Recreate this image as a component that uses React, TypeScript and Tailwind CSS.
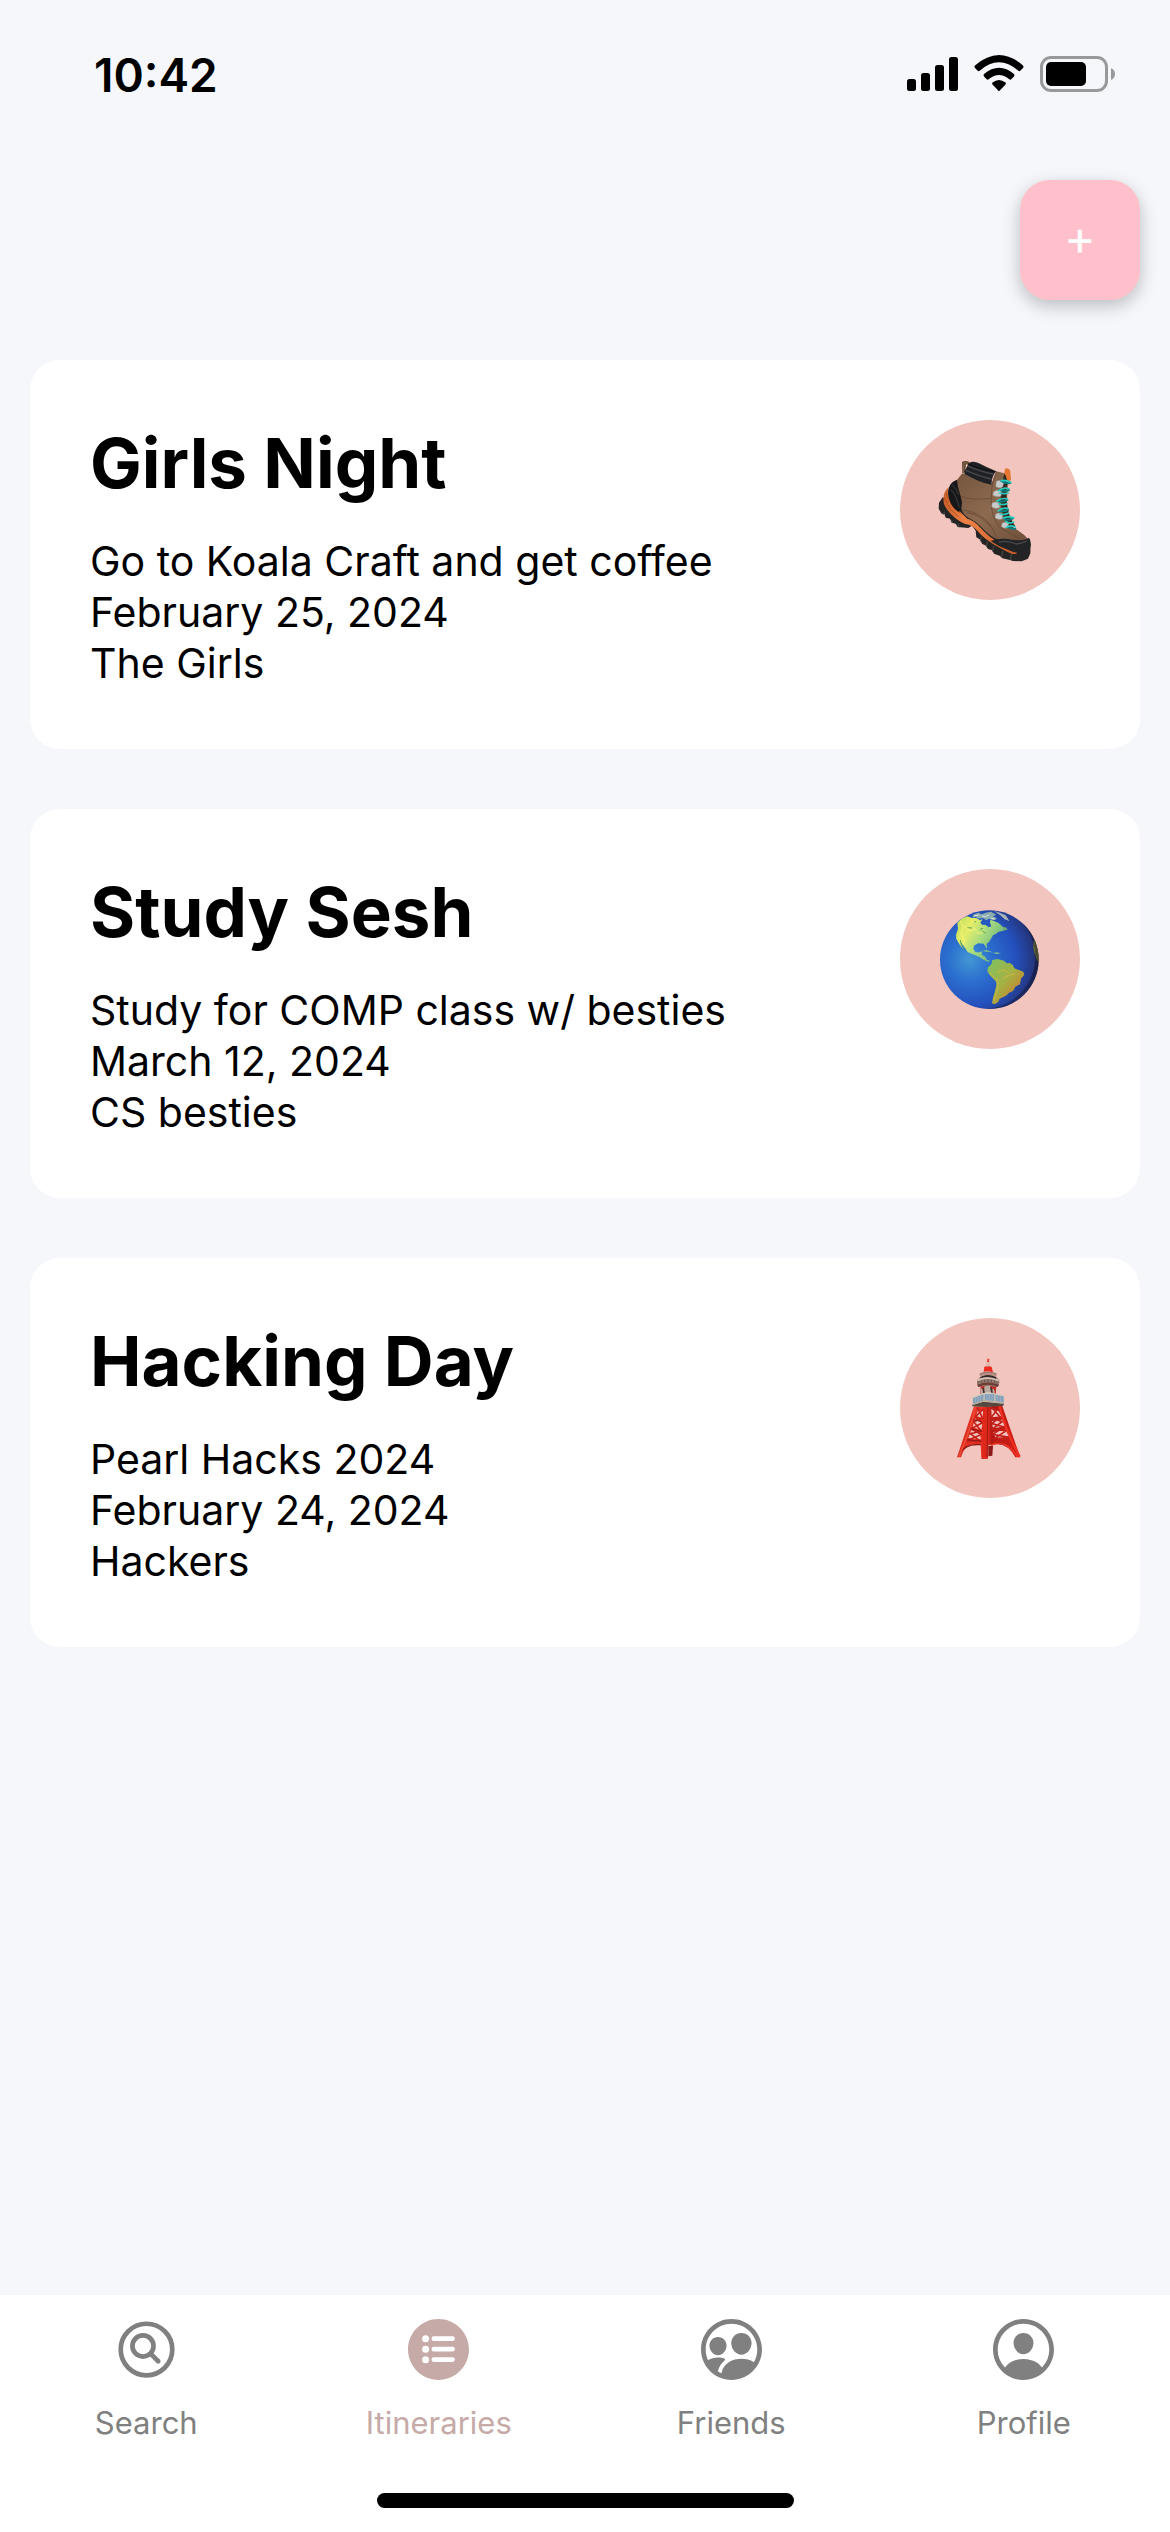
import type { ReactNode } from 'react';
import { IoListCircle, IoPeopleCircleOutline, IoPersonCircleOutline, IoSearchCircleOutline } from 'react-icons/io5';

function BootIcon() {
  return (
    <svg viewBox="135 135 330 330" className="w-[110px] h-[110px]" aria-hidden="true">
      <defs>
        <linearGradient id="leather" x1="0" y1="0" x2="1" y2="1">
          <stop offset="0" stopColor="#76553f" />
          <stop offset="0.5" stopColor="#8c6a4f" />
          <stop offset="1" stopColor="#6d4d38" />
        </linearGradient>
        <linearGradient id="trim" x1="0" y1="0" x2="1" y2="0">
          <stop offset="0" stopColor="#c9602a" />
          <stop offset="0.3" stopColor="#ee8246" />
          <stop offset="1" stopColor="#c65a24" />
        </linearGradient>
      </defs>
      <path d="M158 262L147 278L146 296L155 311L163 312L167 323L180 326L185 338L197 341L203 351L235 354L246 347L257 362L259 382L271 389L276 401L288 407L294 417L307 421L312 431L329 437L337 445L360 450L368 453L395 454L414 446L421 430L422 401L390 392Z" fill="#242425" />
      <path d="M184 330L188 339M204 340L208 352M274 380L271 394M292 394L289 410M311 408L308 425M338 423L335 440M364 432L362 450M164 305L160 314" stroke="#4b4b4c" strokeWidth="3" />
      <path d="M175 232C162 244 157 263 162 283C174 309 200 331 226 342C245 344 256 355 268 369C290 393 330 416 367 432L379 432L380 426C340 408 304 387 280 362C264 344 252 332 232 326L205 300L185 285L174 254Z" fill="url(#trim)" />
      <path d="M163 262L183 300L207 320M167 250L189 291L214 312" stroke="#a94717" strokeWidth="2" fill="none" />
      <path d="M217 190L216 156Q226 150 238 156L236 166L228 162L225 187Z" fill="#604733" />
      <path d="M221 187L221 160Q227 157 233 160" fill="none" stroke="#9b7658" strokeWidth="2" />
      <path d="M343 188L345 176Q352 172 360 180L363 207L354 225L345 211Z" fill="#e57631" />
      <path d="M217 190L199 212Q189 241 214 295Q218 314 237 325C257 334 269 345 283 361C306 384 337 400 371 402L419 396C410 375 386 364 367 350L353 330L350 286L354 222L343 190L319 184L305 220Q262 217 222 191Z" fill="url(#leather)" />
      <path d="M201 209C183 215 174 230 174 250C176 275 190 298 207 306Q215 300 216 278C213 253 203 239 201 209Z" fill="#171719" />
      <path d="M182 239Q198 251 208 292M187 224Q200 238 206 255" fill="none" stroke="#343436" strokeWidth="4" />
      <path d="M238 158Q251 151 267 160Q291 173 319 184Q306 196 304 224Q264 217 223 192Q223 180 229 173Z" fill="#202124" />
      <path d="M236 169Q262 182 309 192M229 182Q262 197 303 207" fill="none" stroke="#48494c" strokeWidth="4" strokeLinecap="round" />
      <path d="M235 162Q261 174 311 185" fill="none" stroke="#0d0e10" strokeWidth="3" />
      <path d="M319 186Q303 219 304 265C302 302 312 337 335 357Q365 371 390 387M213 259Q242 272 303 265M219 300Q270 305 301 345L322 386M231 307Q272 315 302 350" fill="none" stroke="#60442f" strokeWidth="2" />
      <path d="M302 393Q332 382 366 389Q404 394 417 383Q424 392 422 408L410 425Q379 434 350 418Q322 408 302 393Z" fill="#222324" />
      <path d="M326 397Q350 389 379 402Q398 400 411 393" fill="none" stroke="#48494a" strokeWidth="4" />
      <path d="M343 191Q350 197 352 220Q345 262 354 298Q359 326 376 348L364 355Q346 340 339 315Q330 280 333 249Q335 218 343 191Z" fill="#332820" />
      <g fill="#c8c9ca" stroke="#8e8b86" strokeWidth="1">
        <path d="M319 214Q328 208 342 216L338 231Q325 237 317 229Z" />
        <path d="M311 245Q319 237 335 243L333 258Q319 264 308 255Z" />
        <path d="M306 280Q315 273 328 279L329 293Q315 299 305 290Z" />
        <path d="M317 313Q325 306 338 312L337 327Q325 331 315 323Z" />
        <path d="M336 340Q344 333 356 340L354 353Q344 357 334 350Z" />
      </g>
      <g stroke="#087e7e" strokeWidth="6" strokeLinecap="round" fill="none">
        <path d="M334 213Q349 221 361 219M330 240Q343 245 357 240M327 273Q341 277 352 270M329 302Q343 307 354 299M344 327Q355 333 369 325M354 350Q365 358 376 356" />
      </g>
      <g stroke="#26cfc2" strokeWidth="5" strokeLinecap="round" fill="none">
        <path d="M334 212Q346 209 362 217M326 242Q341 231 356 236M329 249Q342 253 355 249M321 273Q334 262 352 267M326 281Q337 286 351 281M324 303Q336 292 352 295M330 312Q342 316 356 309M340 324Q353 318 371 323M347 334Q358 343 371 336M349 352Q361 344 375 350" />
      </g>
    </svg>
  );
}

function GlobeIcon() {
  return (
    <svg viewBox="135 132 330 330" className="w-[110px] h-[110px]" aria-hidden="true">
      <defs>
        <radialGradient id="ocean" cx="0.3" cy="0.5" r="0.72">
          <stop offset="0" stopColor="#4297d4" />
          <stop offset="0.3" stopColor="#2c70cf" />
          <stop offset="0.65" stopColor="#2450bd" />
          <stop offset="0.9" stopColor="#24367f" />
          <stop offset="1" stopColor="#151b3b" />
        </radialGradient>
        <linearGradient id="north" x1="0" y1="0" x2="1" y2="0.5">
          <stop offset="0" stopColor="#b5d85c" />
          <stop offset="0.3" stopColor="#e6ee68" />
          <stop offset="0.6" stopColor="#a7db80" />
          <stop offset="1" stopColor="#66b078" />
        </linearGradient>
        <linearGradient id="south" x1="0" y1="0" x2="1" y2="1">
          <stop offset="0" stopColor="#7dc263" />
          <stop offset="0.48" stopColor="#a3b244" />
          <stop offset="0.7" stopColor="#bd9236" />
          <stop offset="1" stopColor="#948b37" />
        </linearGradient>
        <clipPath id="planet"><circle cx="298" cy="299" r="148" /></clipPath>
      </defs>
      <circle cx="298" cy="299" r="148" fill="url(#ocean)" />
      <g clipPath="url(#planet)">
        <path d="M202 188L216 174L232 169L246 174L259 174L270 181L278 177L271 188L276 194L287 195L296 202L304 199L300 188L301 179L314 184L326 189L336 198L348 207L338 213L326 215L318 221L309 226L303 236L297 246L290 251L291 267L287 260L281 251L264 250L252 257L250 267L257 277L269 277L276 274L275 284L286 290L291 300L301 302L296 306L282 300L267 290L248 283L233 276L225 263L211 245L217 265L210 255L199 237L198 224L204 207Z" fill="url(#north)" />
        <path d="M212 182L220 203L212 221L224 240L220 255M224 198L241 212L254 207L263 220L274 220L282 211" fill="none" stroke="#f8f378" strokeWidth="6" opacity="0.5" />
        <path d="M211 240L213 252L221 267M232 203L246 204M276 212L287 220M258 183L253 188M279 205L270 208" fill="none" stroke="#61a554" strokeWidth="3" />
        <path d="M249 164L265 158L276 163L287 158L303 155L319 164L309 169L321 175L310 181L297 176L289 181L279 174L265 176L257 170L248 173Z" fill="#8dacb0" />
        <path d="M312 153L329 158L347 166L358 183L344 178L331 166Z" fill="#aab5b7" />
        <path d="M253 168L267 165M276 168L287 170L298 164M302 174L316 178" stroke="#d8dfd5" strokeWidth="3" fill="none" />
        <path d="M336 202L347 202L353 208L343 212" fill="#72a77a" />
        <path d="M277 273L289 269L304 275L309 278L300 276L287 275ZM309 278L321 277L332 280L320 283Z" fill="#77b894" />
        <path d="M307 300L323 297L342 302L350 310L360 309L369 316L373 325L387 330L400 335L403 344L393 356L390 373L376 380L369 393L357 398L350 406L340 411L329 416L324 427L313 433L306 430L309 413L314 397L319 376L318 365L309 355L299 345L292 334L294 322L304 313Z" fill="url(#south)" />
        <path d="M299 339L312 354L323 360L325 376L319 397L311 422M337 356L357 346L375 342M320 337L340 330L356 337" fill="none" stroke="#d8b845" strokeWidth="4" opacity="0.6" />
        <path d="M433 235Q426 261 436 286Q440 305 448 309L448 249Z" fill="#77772d" />
        <path d="M394 186C435 226 447 293 426 344C406 397 356 445 289 446C357 452 432 413 447 331C458 263 434 206 387 177Z" fill="#111735" opacity="0.45" />
      </g>
    </svg>
  );
}

function TowerIcon() {
  return (
    <svg viewBox="135 144 330 330" className="w-[110px] h-[110px]" aria-hidden="true">
      <defs>
        <linearGradient id="steel" x1="0" y1="0" x2="1" y2="0">
          <stop offset="0" stopColor="#d72b1f" />
          <stop offset="0.47" stopColor="#ed3325" />
          <stop offset="0.55" stopColor="#ae1712" />
          <stop offset="1" stopColor="#dc2118" />
        </linearGradient>
      </defs>
      <path d="M254 298L201 457L213 457Q222 424 247 418L272 420L274 461L293 461L295 420L321 418Q354 417 376 457L391 457L335 298Z M264 316L279 318L278 338L258 333Z M255 342L277 354L274 374L248 367Z M244 376L271 388L272 403L235 399Z M304 312L326 318L334 334L305 337Z M305 347L337 344L347 364L309 370Z M309 382L351 373L359 397L318 402Z" fill="url(#steel)" fillRule="evenodd" />
      <path d="M280 298L276 461L293 461L300 298Z" fill="#df281c" />
      <path d="M294 298L291 458" stroke="#a31611" strokeWidth="3" />
      <path d="M295 423L309 422L307 452L295 454Z" fill="#8f1715" />
      <path d="M303 421Q344 398 383 456" fill="none" stroke="#ea3223" strokeWidth="5" />
      <path d="M208 449Q224 414 273 419" fill="none" stroke="#8e1814" strokeWidth="4" />
      <g fill="none" stroke="#c31e18" strokeWidth="5">
        <path d="M262 308L278 339L251 350L274 379L241 386L269 407L231 408M279 313L257 334L276 354L246 370L273 389L235 405" />
        <path d="M304 306L330 336L306 356L342 366L308 388L358 397L311 411L374 416M325 309L304 337L336 350L306 373L349 377L314 400L363 406M302 347L336 337M303 376L348 367M300 402L360 397" />
        <path d="M243 342L276 350M239 371L275 379M230 404L275 409" stroke="#8d1916" strokeWidth="3" />
      </g>
      <path d="M328 299Q342 369 389 455" stroke="#ee3023" strokeWidth="7" fill="none" />
      <path d="M257 302Q244 370 207 454" stroke="#ef4a35" strokeWidth="5" fill="none" />
      <path d="M272 241L319 242L317 270L271 270Z" fill="#be2920" />
      <path d="M271 255L276 249L280 257L286 237L299 237L304 258L310 250L315 261L310 269L273 269Z" fill="#b9aaa0" />
      <path d="M280 249L282 265M303 247L306 264" stroke="#442d29" strokeWidth="5" />
      <path d="M245 274L294 261L344 271L343 297L292 305L247 304Z" fill="#d9cbbd" />
      <path d="M249 279L281 268L280 287L249 296ZM284 267L313 267L313 288L284 286ZM316 269L341 274L341 292L317 288Z" fill="#849fb9" />
      <path d="M256 277L256 293M263 275L263 291M271 272L271 289M291 267L291 287M298 267L298 287M306 267L306 287M324 271L324 289M332 272L332 291" stroke="#a9bccb" strokeWidth="2" />
      <path d="M247 299L280 290L342 296L340 302L290 306L247 304Z" fill="#554840" />
      <path d="M250 298L282 287L342 294" fill="none" stroke="#b8aa9c" strokeWidth="4" />
      <path d="M261 225Q273 211 296 213Q322 213 328 226L327 242Q314 249 304 242L278 244Q263 250 261 240Z" fill="#94766b" />
      <path d="M262 226Q294 212 326 227" fill="none" stroke="#d6c2b4" strokeWidth="6" />
      <path d="M267 234L267 229M275 233L275 226M284 231L284 224M294 231L294 222M304 231L304 224M314 233L314 226M321 235L321 229" stroke="#62564e" strokeWidth="3" />
      <path d="M263 239Q293 226 326 239L323 246Q294 233 265 246Z" fill="#6c3d35" />
      <path d="M271 216Q294 203 319 216L318 221Q294 211 271 220Z" fill="#322a28" />
      <path d="M269 207Q294 193 320 207L318 216Q294 204 270 215Z" fill="#b58f83" />
      <path d="M269 207Q294 195 320 207" fill="none" stroke="#967266" strokeWidth="3" />
      <path d="M281 200L283 186L293 181L305 186L309 202Q293 196 281 200Z" fill="#eb2b20" />
      <path d="M289 185L290 171L298 171L301 184Z" fill="#d8b7a4" />
      <path d="M291 171L293 159L297 163L298 171Z" fill="#ef342b" />
    </svg>
  );
}

interface Itinerary {
  title: string;
  description: string;
  date: string;
  group: string;
  icon: ReactNode;
}

const itineraries: Itinerary[] = [
  { title: 'Girls Night', description: 'Go to Koala Craft and get coffee', date: 'February 25, 2024', group: 'The Girls', icon: <BootIcon /> },
  { title: 'Study Sesh', description: 'Study for COMP class w/ besties', date: 'March 12, 2024', group: 'CS besties', icon: <GlobeIcon /> },
  { title: 'Hacking Day', description: 'Pearl Hacks 2024', date: 'February 24, 2024', group: 'Hackers', icon: <TowerIcon /> },
];

const tabs = [
  { label: 'Search', Icon: IoSearchCircleOutline },
  { label: 'Itineraries', Icon: IoListCircle, active: true },
  { label: 'Friends', Icon: IoPeopleCircleOutline },
  { label: 'Profile', Icon: IoPersonCircleOutline },
];

function StatusBar() {
  return (
    <div className="flex items-center justify-between h-[150px] pl-[94px] pr-[54px]">
      <span className="text-[46px] font-semibold">10:42</span>
      <svg viewBox="0 0 210 40" className="w-[210px] h-[40px]" aria-hidden="true">
        <rect x="1" y="24" width="9" height="12" rx="2.5" />
        <rect x="15" y="18" width="9" height="18" rx="2.5" />
        <rect x="29" y="10" width="9" height="26" rx="2.5" />
        <rect x="43" y="2" width="9" height="34" rx="2.5" />
        <path d="M69 10.5Q93 -10.500 117 10.500Q118 12 117 13L114 16Q113 16.500 112 15.500Q93 -1 74 15.500Q73 16.500 72 16L69 13Q68 12 69 10.500Z" />
        <path d="M78 19Q93 6.500 108 19Q109 20 108 21.500L105 24.500Q104 25 103 24Q93 16 83 24Q82 25 81 24.500L78 21.500Q77 20 78 19Z" />
        <path d="M86.500 27.500Q93 22.500 99.500 27.500Q100.500 28.500 99.500 29.500L93.800 35.500Q93 36.500 92.200 35.500L86.500 29.500Q85.500 28.500 86.500 27.500Z" />
        <rect x="135.500" y="2.500" width="65" height="33" rx="9.500" fill="none" stroke="#98999b" strokeWidth="3" />
        <rect x="140" y="7" width="40" height="24" rx="5" />
        <path d="M205 13Q209 15 209 19T205 25Z" fill="#98999b" />
      </svg>
    </div>
  );
}

function ItineraryCard({ title, description, date, group, icon }: Itinerary) {
  return (
    <article className="flex items-start justify-between rounded-[30px] bg-white p-[60px]">
      <div>
        <h2 className="text-[69px] leading-[86px] font-bold mb-[30px]">{title}</h2>
        <div className="text-[41px] leading-[51px]">
          <p>{description}</p>
          <p>{date}</p>
          <p>{group}</p>
        </div>
      </div>
      <div className="flex items-center justify-center shrink-0 w-[180px] h-[180px] rounded-full bg-[#f2c5bf]">
        {icon}
      </div>
    </article>
  );
}

export default function App() {
  return (
    <div className="min-h-screen flex flex-col bg-[#f6f7fb] text-black font-['Inter',sans-serif]">
      <StatusBar />
      <main className="flex flex-col gap-[60px] p-[30px]">
        <button
          type="button"
          aria-label="Add itinerary"
          className="self-end w-[120px] h-[120px] pb-1 rounded-[30px] bg-[#ffc0cb] text-5xl text-white shadow-[0_6px_18px_rgba(0,0,0,0.24)]"
        >
          +
        </button>
        {itineraries.map((item) => (
          <ItineraryCard key={item.title} {...item} />
        ))}
      </main>
      <nav className="mt-auto bg-white pt-[17px] pb-6">
        <div className="grid grid-cols-4">
          {tabs.map(({ label, Icon, active }) => (
            <a
              key={label}
              href="#"
              aria-current={active ? 'page' : undefined}
              className={`flex flex-col items-center gap-[18px] text-[31px] leading-[36px] ${active ? 'text-[#c6aaa7]' : 'text-[#808080]'}`}
            >
              <Icon className="w-[75px] h-[75px]" />
              {label}
            </a>
          ))}
        </div>
        <div className="mx-auto mt-[52px] w-[417px] h-[15px] rounded-full bg-black" />
      </nav>
    </div>
  );
}
